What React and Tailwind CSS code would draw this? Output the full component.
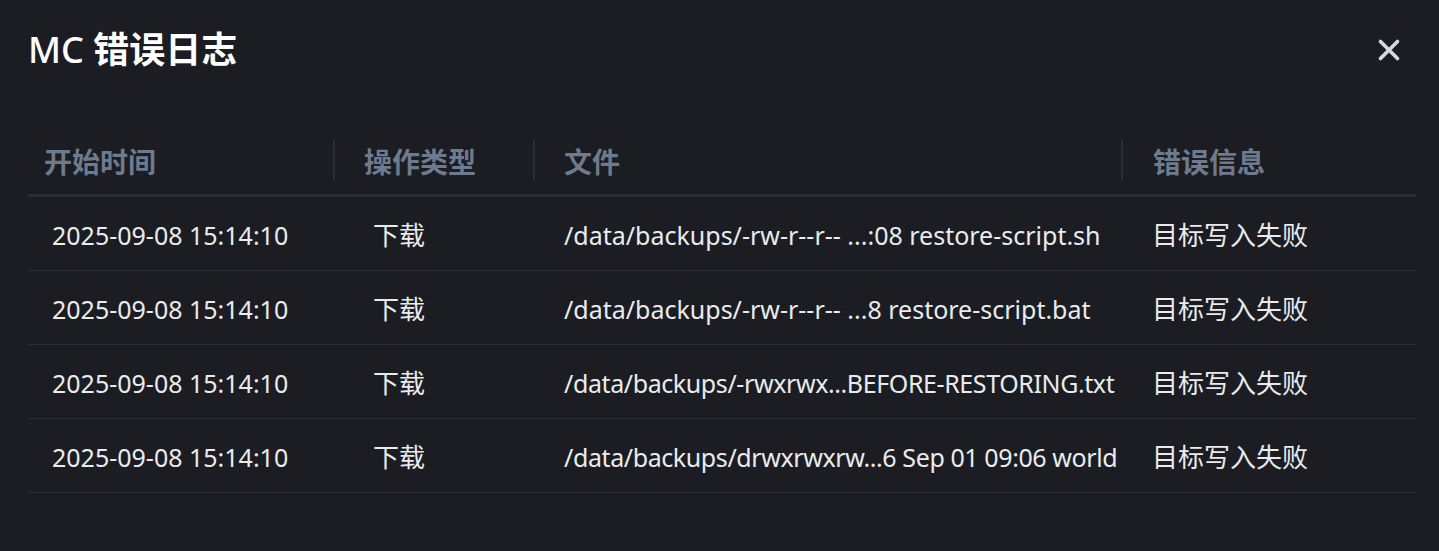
import { X } from "lucide-react";

const rows = [
  { time: "2025-09-08 15:14:10", op: "下载", file: "/data/backups/-rw-r--r-- ...:08 restore-script.sh", err: "目标写入失败", tight: false },
  { time: "2025-09-08 15:14:10", op: "下载", file: "/data/backups/-rw-r--r-- ...8 restore-script.bat", err: "目标写入失败", tight: false },
  { time: "2025-09-08 15:14:10", op: "下载", file: "/data/backups/-rwxrwx...BEFORE-RESTORING.txt", err: "目标写入失败", tight: true },
  { time: "2025-09-08 15:14:10", op: "下载", file: "/data/backups/drwxrwxrw...6 Sep 01 09:06 world", err: "目标写入失败", tight: true },
];

const cols = "grid grid-cols-[305px_200px_588px_295px]";

const App = () => {
  return (
    <div
      className="h-screen bg-[#1b1d22] pl-[28px] pr-[23px] text-[#e9ebee]"
      style={{ fontFamily: '"Noto Sans", "Noto Sans CJK SC", sans-serif' }}
    >
      <div className="flex items-center justify-between pt-[23px]">
        <h1 className="text-[36px] leading-[54px] text-white">
          <span className="font-medium">MC </span>
          <span className="font-bold">错误日志</span>
        </h1>
        <button className="mr-[10px] text-[#d3dae3]">
          <X size={34} strokeWidth={2.6} />
        </button>
      </div>

      <div className="mt-[63px]">
        {/* header */}
        <div className={`${cols} border-b-[3px] border-[#2b2e34] pb-[14px] text-[28px] font-bold text-[#6e7a8e]`}>
          <div className="flex h-10 items-center pl-4 pt-1">开始时间</div>
          <div className="flex h-10 items-center border-l-2 border-[#2b2e34] pl-[29px] pt-1">操作类型</div>
          <div className="flex h-10 items-center border-l-2 border-[#2b2e34] pl-[29px] pt-1">文件</div>
          <div className="flex h-10 items-center border-l-2 border-[#2b2e34] pl-[30px] pt-1">错误信息</div>
        </div>

        {rows.map((r, i) => (
          <div key={i} className={`${cols} h-[74px] border-b border-[#2b2e34] text-[25px]`}>
            <div className="flex items-center pl-6 pt-1">{r.time}</div>
            <div className="flex items-center pl-10 pt-1 text-[26px]">{r.op}</div>
            <div className={`flex items-center whitespace-pre pl-[31px] pt-1 ${r.tight ? "tracking-[-0.4px]" : ""}`}>
              {r.file}
            </div>
            <div className="flex items-center pl-[31px] pt-1 text-[26px]">{r.err}</div>
          </div>
        ))}
      </div>
    </div>
  );
};

export default App;
